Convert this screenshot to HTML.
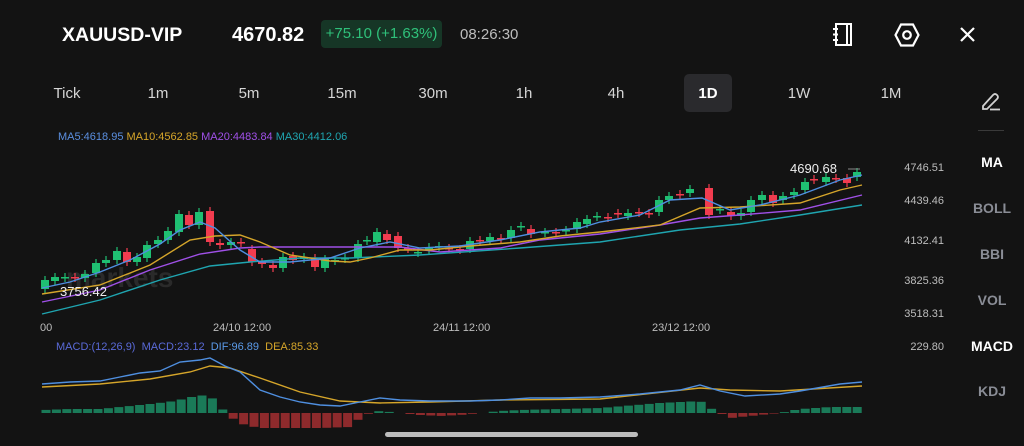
<!DOCTYPE html>
<html><head><meta charset="utf-8"><style>
*{margin:0;padding:0;box-sizing:border-box}
body{width:1024px;height:446px;background:#131313;font-family:"Liberation Sans",sans-serif;color:#fff;position:relative;overflow:hidden}
.a{position:absolute;white-space:nowrap}
.tab{position:absolute;top:85px;font-size:15px;color:#d6d6d6;transform:translateX(-50%)}
.ax{position:absolute;font-size:11px;color:#bdbdbd;right:80px}
.side{position:absolute;font-size:14px;font-weight:bold;color:#8a8d96;width:60px;text-align:center;left:962px}
</style></head><body>
<div class="a" style="left:62px;top:24px;font-size:19.5px;font-weight:bold">XAUUSD-VIP</div>
<div class="a" style="left:232px;top:24px;font-size:20px;font-weight:bold">4670.82</div>
<div class="a" style="left:321px;top:20px;width:121px;height:28px;background:#163626;border-radius:4px;color:#2fc07a;font-size:15px;line-height:28px;text-align:center">+75.10 (+1.63%)</div>
<div class="a" style="left:460px;top:26px;font-size:15px;color:#bdbdbd">08:26:30</div>
<svg class="a" style="left:830px;top:20px" width="150" height="30" viewBox="0 0 150 30">
<rect x="6" y="4" width="15" height="21" fill="none" stroke="#fff" stroke-width="2"/><line x1="17" y1="4" x2="17" y2="25" stroke="#fff" stroke-width="2"/>
<line x1="3" y1="9" x2="8" y2="9" stroke="#fff" stroke-width="2"/><line x1="3" y1="14.5" x2="8" y2="14.5" stroke="#fff" stroke-width="2"/><line x1="3" y1="20" x2="8" y2="20" stroke="#fff" stroke-width="2"/>
<line x1="131" y1="8" x2="144" y2="21" stroke="#fff" stroke-width="2.2"/><line x1="144" y1="8" x2="131" y2="21" stroke="#fff" stroke-width="2.2"/>
</svg>
<svg class="a" style="left:894px;top:22px" width="26" height="26" viewBox="0 0 26 26"><polygon points="7,2.5 19,2.5 24.5,13 19,23.5 7,23.5 1.5,13" fill="none" stroke="#fff" stroke-width="2.2"/><circle cx="13" cy="13" r="3.8" fill="none" stroke="#fff" stroke-width="2.2"/></svg>
<div class="a" style="left:684px;top:74px;width:48px;height:38px;background:#2a2a2d;border-radius:5px"></div>
<div class="tab" style="left:67px">Tick</div><div class="tab" style="left:158px">1m</div><div class="tab" style="left:249px">5m</div><div class="tab" style="left:342px">15m</div><div class="tab" style="left:433px">30m</div><div class="tab" style="left:524px">1h</div><div class="tab" style="left:616px">4h</div><div class="tab" style="left:708px;color:#fff;font-weight:bold">1D</div><div class="tab" style="left:799px">1W</div><div class="tab" style="left:891px">1M</div>
<svg class="a" style="left:980px;top:90px" width="22" height="22" viewBox="0 0 22 22"><path d="M3 16 L13 5 Q15 3 17 5 Q19 7 17 9 L7 19 L3 19 Z" fill="none" stroke="#d0d0d0" stroke-width="1.8"/><line x1="10" y1="19.5" x2="20" y2="19.5" stroke="#d0d0d0" stroke-width="1.8"/></svg>
<div class="a" style="left:978px;top:130px;width:26px;height:1px;background:#3a3a3a"></div>
<div class="a" style="left:58px;top:131px;font-size:11px"><span style="color:#5b8fe0">MA5:4618.95</span> <span style="color:#d5a52a">MA10:4562.85</span> <span style="color:#a050e8">MA20:4483.84</span> <span style="color:#1fa5b0">MA30:4412.06</span></div>
<div class="a" style="left:66px;top:262px;font-size:28px;color:#2a2a2a;font-weight:bold">markets</div>
<svg id="ch" class="a" style="left:0;top:0" width="1024" height="446"></svg>
<div class="a" style="left:790px;top:161px;font-size:13px;color:#eee">4690.68</div>
<div class="a" style="left:60px;top:284px;font-size:13px;color:#eee">3756.42</div>
<div class="ax" style="top:162px">4746.51</div><div class="ax" style="top:195px">4439.46</div><div class="ax" style="top:235px">4132.41</div><div class="ax" style="top:275px">3825.36</div><div class="ax" style="top:308px">3518.31</div><div class="ax" style="top:341px">229.80</div>
<div class="a" style="left:40px;top:322px;font-size:11px;color:#bdbdbd">00</div>
<div class="a" style="left:213px;top:322px;font-size:11px;color:#bdbdbd">24/10 12:00</div>
<div class="a" style="left:433px;top:322px;font-size:11px;color:#bdbdbd">24/11 12:00</div>
<div class="a" style="left:652px;top:322px;font-size:11px;color:#bdbdbd">23/12 12:00</div>
<div class="a" style="left:56px;top:341px;font-size:11px"><span style="color:#5a6ad8">MACD:(12,26,9)</span>&nbsp; <span style="color:#5a6ad8">MACD:23.12</span>&nbsp; <span style="color:#5b9ae8">DIF:96.89</span>&nbsp; <span style="color:#d5a52a">DEA:85.33</span></div>
<div class="side" style="top:154px;color:#fff">MA</div><div class="side" style="top:200px">BOLL</div><div class="side" style="top:246px">BBI</div><div class="side" style="top:292px">VOL</div><div class="side" style="top:338px;color:#fff">MACD</div><div class="side" style="top:383px">KDJ</div>
<div class="a" style="left:385px;top:432px;width:253px;height:5px;background:#bdbdbd;border-radius:3px"></div>
<script>
var s='';
function pl(p,c){s+='<polyline fill="none" stroke="'+c+'" stroke-width="1.4" points="'+p+'"/>';}
var C=[[45,280,289,'g'],[55,277,281,'g'],[65,277,278,'g'],[75,277,278,'r'],[85,274,278,'g'],[96,263,273,'g'],[106,260,263,'g'],[117,251,260,'g'],[127,252,262,'r'],[137,257,262,'g'],[147,245,258,'g'],[158,240,244,'g'],[168,231,240,'g'],[179,214,232,'g'],[189,215,225,'r'],[199,212,225,'g'],[210,211,242,'r'],[220,243,245,'r'],[231,242,245,'g'],[241,242,243,'r'],[252,249,262,'r'],[262,262,264,'r'],[273,265,268,'r'],[283,257,268,'g'],[293,256,260,'r'],[304,257,259,'g'],[315,258,267,'r'],[325,259,268,'g'],[335,260,261,'g'],[345,258,259,'g'],[358,244,258,'g'],[367,240,241,'g'],[377,232,242,'g'],[387,234,240,'r'],[398,236,248,'r'],[408,248,249,'r'],[418,252,253,'g'],[429,247,250,'g'],[439,246,247,'g'],[449,248,249,'r'],[460,249,250,'r'],[470,241,249,'g'],[480,240,241,'r'],[490,237,241,'g'],[501,238,239,'r'],[511,230,238,'g'],[521,226,227,'g'],[531,229,234,'r'],[545,232,233,'g'],[556,232,233,'r'],[566,230,231,'g'],[577,222,229,'g'],[587,219,224,'g'],[597,216,217,'g'],[608,217,218,'r'],[618,213,214,'r'],[628,213,216,'g'],[639,212,213,'r'],[649,213,214,'r'],[659,200,212,'g'],[669,196,200,'g'],[680,194,195,'r'],[690,189,193,'g'],[709,188,215,'r'],[720,209,210,'g'],[731,212,216,'r'],[741,213,216,'g'],[751,200,212,'g'],[762,195,200,'g'],[773,195,203,'r'],[783,196,200,'g'],[794,192,195,'g'],[805,182,190,'g'],[814,179,180,'r'],[826,177,182,'g'],[836,178,179,'r'],[847,178,183,'r'],[857,172,177,'g']];
C.forEach(function(c){var col=c[3]=='g'?'#1fbf72':'#f23c4f';var h=Math.max(1.5,c[2]-c[1]);
s+='<line x1="'+c[0]+'" x2="'+c[0]+'" y1="'+(c[1]-4)+'" y2="'+(c[2]+4)+'" stroke="'+col+'" stroke-width="1.2"/>';
s+='<rect x="'+(c[0]-4)+'" y="'+c[1]+'" width="8" height="'+h+'" fill="'+col+'"/>';});
pl('42,314 100,300 160,280 210,266 250,262 300,258 350,258 420,255 520,248 600,242 680,230 740,224 800,215 862,205','#1fa5b0');
pl('42,302 100,290 150,270 200,254 240,248 260,247 300,247 350,247 400,247 440,252 470,250 500,248 540,240 600,234 660,225 700,218 740,215 800,210 862,195','#a050e8');
pl('42,294 100,285 150,265 190,240 215,236 240,235 260,242 290,255 330,261 350,262 370,258 400,250 430,250 470,246 520,242 560,236 600,232 660,225 700,208 740,207 800,203 840,190 862,185','#d5a52a');
pl('42,288 70,282 100,272 130,260 160,244 180,230 200,222 215,228 240,250 260,262 290,262 330,258 360,248 390,242 420,248 460,246 500,240 540,232 580,228 600,222 640,215 670,200 702,198 730,210 760,205 800,195 840,180 862,175','#4f8fe0');
s+='<line x1="848" y1="169" x2="860" y2="169" stroke="#888" stroke-width="1"/>';
var K=[[42,3],[70,4],[100,4],[130,7],[150,9],[175,12],[200,18],[212,15],[220,8],[225,0],[230,-4],[245,-12],[260,-15],[320,-15],[350,-14],[360,-5],[370,0],[380,2],[400,0],[420,-2],[440,-3],[460,-2],[480,0],[500,2],[520,3],[560,4],[600,5],[660,10],[700,12],[710,5],[720,0],[730,-5],[760,-2],[780,0],[800,4],[830,6],[862,6]];
function iv(x){for(var i=0;i<K.length-1;i++){if(x>=K[i][0]&&x<=K[i+1][0]){var t=(x-K[i][0])/(K[i+1][0]-K[i][0]);return K[i][1]+t*(K[i+1][1]-K[i][1]);}}return 0;}
for(var x=46;x<862;x+=10.4){var v=iv(x);if(Math.abs(v)<0.5)continue;
s+='<rect x="'+(x-4.5).toFixed(1)+'" y="'+(v>0?413-v:413).toFixed(1)+'" width="9" height="'+Math.abs(v).toFixed(1)+'" fill="'+(v>0?'#1a7a58':'#8e2a2c')+'"/>';}
pl('42,387 100,384 150,379 190,372 210,366 230,368 260,378 300,392 340,401 380,403 430,402 500,400 600,399 700,388 730,390 780,391 862,386','#d5a52a');
pl('42,384 70,382 100,381 120,377 140,373 160,371 180,362 200,360 210,358 225,366 240,372 260,390 280,397 300,402 320,405 340,406 355,403 380,398 400,400 430,401 470,401 500,400 530,398 560,398 600,397 640,394 680,390 700,385 720,391 745,396 780,394 800,391 840,384 862,382','#4f8fe0');
document.getElementById('ch').innerHTML=s;
</script>
</body></html>
